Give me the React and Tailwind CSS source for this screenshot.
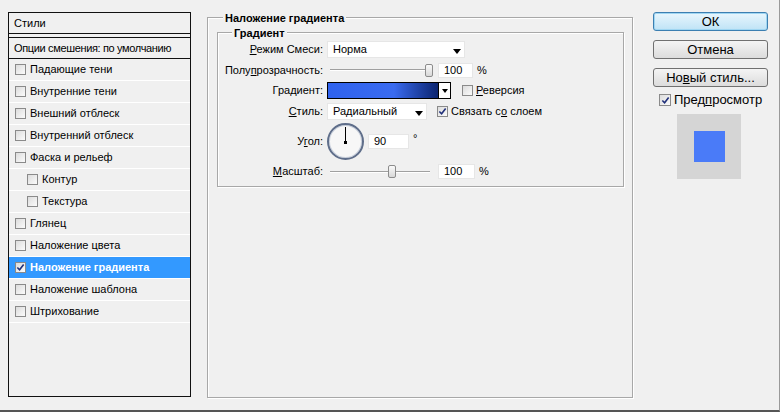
import React from 'react';

const items = [
  { label: 'Падающие тени' },
  { label: 'Внутренние тени' },
  { label: 'Внешний отблеск' },
  { label: 'Внутренний отблеск' },
  { label: 'Фаска и рельеф' },
  { label: 'Контур', nested: true },
  { label: 'Текстура', nested: true },
  { label: 'Глянец' },
  { label: 'Наложение цвета' },
  { label: 'Наложение градиента', active: true },
  { label: 'Наложение шаблона' },
  { label: 'Штрихование' },
];

// small windows-classic checkbox
const Check = ({ checked, size = 'w-[11px] h-[11px]' }) => (
  <span
    className={`${size} shrink-0 flex items-center justify-center border border-[#8a8a8a] bg-gradient-to-br from-[#dcdcdc] to-[#fbfbfb]`}
  >
    {checked && (
      <svg viewBox="0 0 10 10" className="w-[9px] h-[9px]">
        <path d="M1.5 5 L4 7.5 L8.5 1.8" fill="none" stroke="#21307a" strokeWidth="1.8" />
      </svg>
    )}
  </span>
);

const Arrow = () => (
  <svg viewBox="0 0 8 5" className="w-[8px] h-[5px]">
    <path d="M0 0 H8 L4 5 Z" fill="#000" />
  </svg>
);

const Select = ({ value, width }) => (
  <div className={`${width} h-[17px] flex items-center justify-between bg-white border border-[#e6e6e6] pl-[5px] pr-[3px]`}>
    <span>{value}</span>
    <span className="mt-[3px]">
      <Arrow />
    </span>
  </div>
);

const Slider = ({ pos }) => (
  <div className="w-[105px] h-[15px] relative flex items-center">
    <div className="ml-[3px] w-[100px] h-[2px] border-t border-[#a0a0a0] border-b border-b-white" />
    <div
      className="absolute top-[1px] w-[8px] h-[13px] rounded-[2px] border border-[#8c8c8c] bg-gradient-to-b from-[#fafafa] to-[#d8d8d8]"
      style={{ left: pos }}
    />
  </div>
);

const NumField = ({ value, width = 'w-[35px]' }) => (
  <div className={`${width} h-[15px] bg-white border border-[#e6e6e6] pl-[5px] flex items-center`}>{value}</div>
);

const Label = ({ children }) => (
  <div className="w-[105px] shrink-0 text-right pr-0">{children}</div>
);

export default function App() {
  return (
    <div
      className="w-[780px] h-[412px] bg-[#f0f0f0] text-[11px] text-black border-b-2 border-[#555] border-r border-r-[#9a9a9a] flex pl-[8px] overflow-hidden"
      style={{ fontFamily: '"Liberation Sans", Arial, sans-serif' }}
    >
      {/* Styles list */}
      <div className="mt-[12px] w-[183px] h-[385px] border border-[#111] bg-[#f0f0f0] flex flex-col">
        <div className="h-[21px] flex items-center pl-[5px] border-b border-[#111]">Стили</div>
        <div className="mt-[3px] h-[22px] flex items-center pl-[5px] border-t border-b border-[#111] tracking-[-0.35px]">
          Опции смешения: по умолчанию
        </div>
        {items.map((it) => (
          <div
            key={it.label}
            className={`h-[22px] flex items-center border-b border-white ${
              it.nested ? 'pl-[18px]' : 'pl-[6px]'
            } ${it.active ? 'bg-[#3399ff] text-white font-bold' : ''}`}
          >
            <Check checked={it.active} />
            <span className="ml-[4px]">{it.label}</span>
          </div>
        ))}
      </div>

      {/* Gradient overlay group */}
      <div className="ml-[16px] mt-[17px] w-[426px] h-[381px] border border-[#a8a8a8] shadow-[inset_1px_1px_0_#fff,1px_1px_0_#fff] relative pt-[14px] pl-[9px]">
        <span className="absolute -top-[8px] left-[15px] px-[2px] bg-[#f0f0f0] font-bold">Наложение градиента</span>

        <div className="w-[407px] h-[155px] border border-[#a8a8a8] shadow-[inset_1px_1px_0_#fff,1px_1px_0_#fff] relative pt-[8px]">
          <span className="absolute -top-[8px] left-[14px] px-[2px] bg-[#f0f0f0] font-bold">Градиент</span>

          <div className="flex items-center h-[17px]">
            <Label>
              <u>Р</u>ежим Смеси:
            </Label>
            <div className="ml-[4px]">
              <Select value="Норма" width="w-[138px]" />
            </div>
          </div>

          <div className="flex items-center h-[16px] mt-[4px]">
            <Label>
              Полу<u>п</u>розрачность:
            </Label>
            <div className="ml-[4px]">
              <Slider pos="98px" />
            </div>
            <div className="ml-[6px]">
              <NumField value="100" />
            </div>
            <span className="ml-[4px]">%</span>
          </div>

          <div className="flex items-center h-[17px] mt-[4px]">
            <Label>Градиент:</Label>
            <div className="ml-[4px] flex h-[17px] border border-black">
              <div className="w-[110px] h-full bg-gradient-to-r from-[#2f62ee] via-[#3a6bf0] via-60% to-[#0b2470]" />
              <div className="w-[12px] h-full bg-white border-l border-black flex items-center justify-center">
                <svg viewBox="0 0 6 4" className="w-[6px] h-[4px]">
                  <path d="M0 0 H6 L3 4 Z" fill="#000" />
                </svg>
              </div>
            </div>
            <div className="ml-[11px] flex items-center">
              <Check />
              <span className="ml-[3px]">
                <u>Р</u>еверсия
              </span>
            </div>
          </div>

          <div className="flex items-center h-[17px] mt-[4px]">
            <Label>
              <u>С</u>тиль:
            </Label>
            <div className="ml-[4px]">
              <Select value="Радиальный" width="w-[100px]" />
            </div>
            <div className="ml-[10px] flex items-center">
              <Check checked />
              <span className="ml-[3px]">
                Связать с<u>о</u> слоем
              </span>
            </div>
          </div>

          <div className="flex items-center h-[36px] mt-[3px]">
            <Label>
              У<u>г</u>ол:
            </Label>
            <div className="ml-[4px] w-[37px] h-[37px] rounded-full border-2 border-[#5f6e8a] bg-[#f7f7f7] shadow-[inset_0_0_0_1px_#c9d0dc] flex flex-col items-center">
              <div className="w-[1px] h-[15px] mt-[2px] bg-black" />
              <div className="w-[3px] h-[3px] -mt-[1px] bg-black" />
            </div>
            <div className="ml-[4px]">
              <NumField value="90" width="w-[41px]" />
            </div>
            <span className="ml-[4px] -mt-[6px]">°</span>
          </div>

          <div className="flex items-center h-[15px] mt-[5px]">
            <Label>
              <u>М</u>асштаб:
            </Label>
            <div className="ml-[4px]">
              <Slider pos="61px" />
            </div>
            <div className="ml-[6px]">
              <NumField value="100" width="w-[37px]" />
            </div>
            <span className="ml-[4px]">%</span>
          </div>
        </div>
      </div>

      {/* Buttons + preview */}
      <div className="ml-[20px] w-[115px] pt-[12px] flex flex-col text-[13px]">
        <button className="h-[19px] rounded-[3px] border border-[#3c7fb1] bg-gradient-to-b from-[#e8f6fd] to-[#bfe3f6] shadow-[inset_0_0_0_1px_#9fd6f2] leading-none">
          ОК
        </button>
        <button className="mt-[9px] h-[19px] rounded-[3px] border border-[#707070] bg-gradient-to-b from-[#f4f4f4] to-[#dcdcdc] leading-none">
          Отмена
        </button>
        <button className="mt-[9px] h-[19px] rounded-[3px] border border-[#707070] bg-gradient-to-b from-[#f4f4f4] to-[#dcdcdc] leading-none">
          Но<u>в</u>ый стиль...
        </button>
        <div className="mt-[5px] h-[16px] flex items-center pl-[6px]">
          <Check checked size="w-[12px] h-[12px]" />
          <span className="ml-[3px]">
            Пред<u>п</u>росмотр
          </span>
        </div>
        <div className="mt-[6px] ml-[24px] w-[64px] h-[65px] bg-[#d5d5d5] flex items-center justify-center">
          <div className="w-[31px] h-[31px] bg-[#4a7bf8]" />
        </div>
      </div>
    </div>
  );
}
